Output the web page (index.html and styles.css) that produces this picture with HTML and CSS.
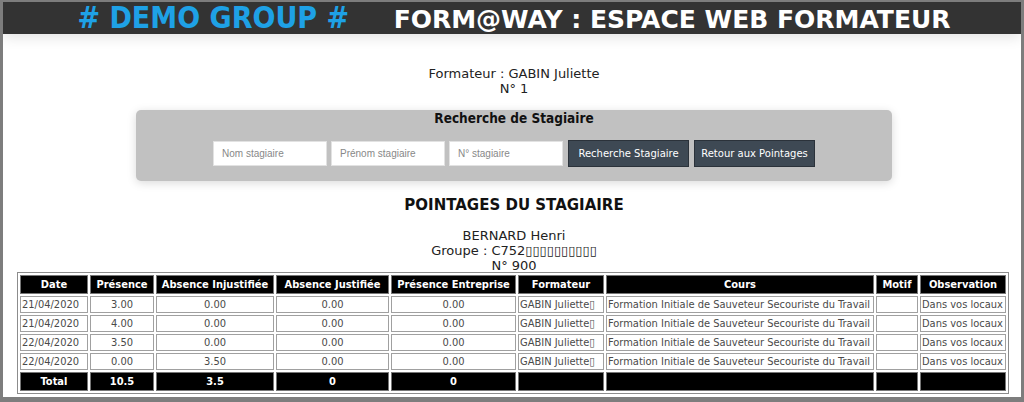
FILE: index.html
```html
<!DOCTYPE html>
<html lang="fr">
<head>
    <meta charset="UTF-8">
    <title>Form@way : Espace Web Formateur</title>
    <link rel="stylesheet" href="styles.css">
</head>
<body>
<div class="frame">
    <div class="topbar">
        <span class="group"># DEMO GROUP #</span>
        <span class="app">FORM@WAY : ESPACE WEB FORMATEUR</span>
    </div>

    <div class="formateur">
        <div>Formateur : GABIN Juliette</div>
        <div>N° 1</div>
    </div>

    <form class="search" id="searchForm">
        <div class="search-title">Recherche de Stagiaire</div>
        <div class="search-row">
            <input type="text" placeholder="Nom stagiaire">
            <input type="text" placeholder="Prénom stagiaire">
            <input type="text" placeholder="N° stagiaire">
            <button type="submit">Recherche Stagiaire</button>
            <button type="button">Retour aux Pointages</button>
        </div>
    </form>

    <h2 class="section-title">POINTAGES DU STAGIAIRE</h2>

    <div class="stagiaire">
        <div>BERNARD Henri</div>
        <div>Groupe : C752▯▯▯▯▯▯▯▯▯▯</div>
        <div>N° 900</div>
    </div>

    <table class="pointages">
        <colgroup>
            <col class="c-date">
            <col class="c-pres">
            <col class="c-absi">
            <col class="c-absj">
            <col class="c-prese">
            <col class="c-form">
            <col class="c-cours">
            <col class="c-motif">
            <col class="c-obs">
        </colgroup>
        <thead>
            <tr>
                <th>Date</th>
                <th>Présence</th>
                <th>Absence Injustifiée</th>
                <th>Absence Justifiée</th>
                <th>Présence Entreprise</th>
                <th>Formateur</th>
                <th>Cours</th>
                <th>Motif</th>
                <th>Observation</th>
            </tr>
        </thead>
        <tbody>
            <tr>
                <td class="txt">21/04/2020</td><td>3.00</td><td>0.00</td><td>0.00</td><td>0.00</td>
                <td class="txt">GABIN Juliette▯</td>
                <td class="txt">Formation Initiale de Sauveteur Secouriste du Travail</td>
                <td></td><td class="txt">Dans vos locaux</td>
            </tr>
            <tr>
                <td class="txt">21/04/2020</td><td>4.00</td><td>0.00</td><td>0.00</td><td>0.00</td>
                <td class="txt">GABIN Juliette▯</td>
                <td class="txt">Formation Initiale de Sauveteur Secouriste du Travail</td>
                <td></td><td class="txt">Dans vos locaux</td>
            </tr>
            <tr>
                <td class="txt">22/04/2020</td><td>3.50</td><td>0.00</td><td>0.00</td><td>0.00</td>
                <td class="txt">GABIN Juliette▯</td>
                <td class="txt">Formation Initiale de Sauveteur Secouriste du Travail</td>
                <td></td><td class="txt">Dans vos locaux</td>
            </tr>
            <tr>
                <td class="txt">22/04/2020</td><td>0.00</td><td>3.50</td><td>0.00</td><td>0.00</td>
                <td class="txt">GABIN Juliette▯</td>
                <td class="txt">Formation Initiale de Sauveteur Secouriste du Travail</td>
                <td></td><td class="txt">Dans vos locaux</td>
            </tr>
        </tbody>
        <tfoot>
            <tr>
                <th>Total</th><th>10.5</th><th>3.5</th><th>0</th><th>0</th>
                <th></th><th></th><th></th><th></th>
            </tr>
        </tfoot>
    </table>
</div>
</body>
</html>
```

FILE: styles.css
```css
html, body {
    margin: 0;
    padding: 0;
}
body {
    font-family: "DejaVu Sans", Verdana, sans-serif;
    font-size: 13px;
    color: #222;
    background: #fff;
}
.frame {
    height: 402px;
    box-sizing: border-box;
    border-style: solid;
    border-color: #7d7d7d;
    border-width: 2px 3px 5px 3px;
    overflow: hidden;
    background: #fff;
}
.topbar {
    height: 32px;
    line-height: 32px;
    background-color: #333333;
    text-align: center;
    font-weight: bold;
    white-space: nowrap;
    box-shadow: 0 3px 14px rgba(0, 0, 0, 0.12);
    padding-left: 4px;
}
.group {
    color: #1ea1e6;
    font-size: 30px;
    font-family: "DejaVu Sans Condensed", "DejaVu Sans", sans-serif;
    margin-right: 40px;
}
.app {
    color: #fff;
    font-size: 25px;
    font-family: "DejaVu Sans", sans-serif;
}
.formateur {
    margin-top: 32px;
    text-align: center;
    line-height: 15px;
    padding-left: 4px;
}
.search {
    width: 756px;
    margin: 14px auto 0 auto;
    position: relative;
    left: 2px;
    background-color: #c1c1c1;
    border-radius: 5px;
    box-shadow: 0 2px 10px rgba(0, 0, 0, 0.15);
    padding: 0 0 14px 0;
    box-sizing: border-box;
    height: 71px;
}
.search-title {
    text-align: center;
    font-weight: bold;
    font-size: 13.5px;
    font-family: "DejaVu Sans Condensed", "DejaVu Sans", sans-serif;
    line-height: 16px;
    color: #111;
}
.search-row {
    display: flex;
    justify-content: center;
    align-items: center;
    margin-top: 14px;
    gap: 4px;
}
.search-row input {
    width: 114px;
    height: 25px;
    box-sizing: border-box;
    border: 1px solid #e2e2e2;
    padding: 2px 8px;
    font-family: "Liberation Sans", Arial, sans-serif;
    font-size: 10px;
    color: #333;
    background: #fff;
}
.search-row input::placeholder {
    color: #888;
}
.search-row button {
    width: 121px;
    height: 27px;
    margin-left: 1px;
    background-color: #3e4954;
    border: 1px solid #2b323a;
    color: #fff;
    font-family: "DejaVu Sans", Verdana, sans-serif;
    font-size: 10px;
    padding: 0;
    cursor: pointer;
}
.section-title {
    margin: 15px 0 0 0;
    text-align: center;
    font-size: 15px;
    line-height: 18px;
    font-family: "DejaVu Sans", sans-serif;
    color: #111;
    padding-left: 4px;
}
.stagiaire {
    margin-top: 14px;
    text-align: center;
    line-height: 15px;
    padding-left: 4px;
}
.pointages {
    width: 992px;
    table-layout: fixed;
    margin: -1px auto 0 auto;
    position: relative;
    left: 1px;
    border: 1px solid #8c8c8c;
    border-spacing: 2px;
    font-family: "DejaVu Sans Condensed", "DejaVu Sans", sans-serif;
    font-size: 11px;
    white-space: nowrap;
}
.c-date { width: 68px; }
.c-pres { width: 64px; }
.c-absi { width: 118px; }
.c-absj { width: 113px; }
.c-prese { width: 125px; }
.c-form { width: 86px; }
.c-cours { width: 268px; }
.c-motif { width: 42px; }
.c-obs { width: 86px; }
.pointages th {
    background-color: #000;
    color: #fff;
    font-weight: bold;
    padding: 2px 1px;
    line-height: 13px;
    border: 1px solid #777;
    overflow: hidden;
}
.pointages td {
    border: 1px solid #a0a0a0;
    padding: 1px 1px;
    line-height: 13px;
    text-align: center;
    color: #4a4a4a;
    overflow: hidden;
}
.pointages td.txt {
    text-align: left;
}
```
